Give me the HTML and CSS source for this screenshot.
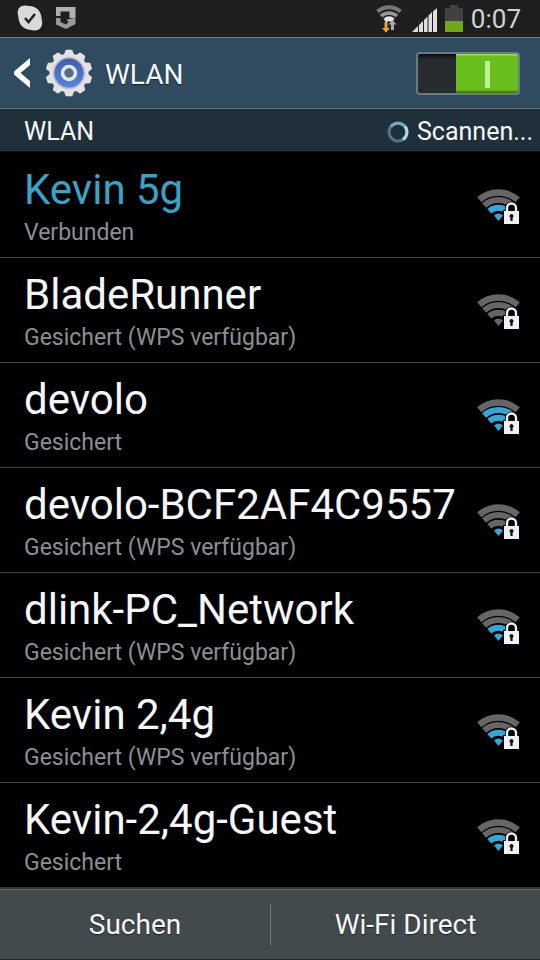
FILE: index.html
```
<!DOCTYPE html>
<html lang="de">
<head>
<meta charset="utf-8">
<meta name="viewport" content="width=device-width, initial-scale=1">
<title>WLAN</title>
<link rel="stylesheet" href="styles.css">
</head>
<body>
<svg class="sprite" aria-hidden="true">
  <symbol id="wifi" viewBox="0 0 44 36">
    <g fill="none">
      <path class="arc3" stroke-width="6.500" d="M2.300 10.800a29 29 0 0 1 38.400 0"/>
      <path class="arc2" stroke-width="6" d="M7.100 16.500a21.500 21.500 0 0 1 28.800 0"/>
      <path class="arc1" stroke-width="6" d="M12.300 22.300a14 14 0 0 1 18.400 0"/>
    </g>
    <path class="arc0" d="M17 26.500q4.500-4 9 0L21.500 32z"/>
    <path fill="#000" d="M26 36V21h2v-2a6.500 6.500 0 0 1 13 0v2h3v15z"/>
    <path fill="none" stroke="#eef0f6" stroke-width="2.400" d="M30 22.500v-3.500a4.500 4.500 0 0 1 9 0v3.500"/>
    <path fill="#eef0f6" d="M27 22h15v13H27z"/>
    <path fill="#111" d="M34.500 25a2.200 2.200 0 0 1 1.100 4v3h-2.200v-3a2.200 2.200 0 0 1 1.100-4z"/>
  </symbol>
</svg>
<div class="screen">
  <div class="status">
    <div class="status-group">
      <svg width="26" height="26" viewBox="0 0 26 26" aria-hidden="true">
        <path fill="#dadada" d="M7.500.5c2 0 3.500.5 5 .5C19 1 24 6 24.500 12.500c0 1.500.7 3 .7 5.500 0 4-3 7.500-7 7.500-2 0-3.500-.7-5.200-.8C7 24.500 2 20 1.500 13 1.300 11 .7 9.500.7 7.500.7 3.500 3.500.5 7.500.5z"/>
        <path fill="none" stroke="#222" stroke-width="2.500" d="M8 13l3.500 4L18 9"/>
      </svg>
      <svg width="20" height="24" viewBox="0 0 20 24" aria-hidden="true">
        <path fill="#b0b0b0" d="M0 2h19.500v11h-6V6.500H4.500V11H0z"/>
        <path fill="#999" d="M0 13h4.500v4l5.500 2.500 2.500-2.500-2-2.500 9-1.500v6L10 24 0 19.500z"/>
      </svg>
    </div>
    <div class="status-group status-right">
      <svg width="26" height="28" viewBox="0 0 26 28" aria-hidden="true">
        <g fill="none">
          <path stroke="#777" stroke-width="4" d="M1.500 6.500a17.500 17.500 0 0 1 23 0"/>
          <path stroke="#999" stroke-width="3.500" d="M5 11a12 12 0 0 1 16 0"/>
        </g>
        <path fill="#e4e4e4" d="M7.500 13.500q5.500-4.500 11 0L16 17.500q-3-2.500-6 0z"/>
        <path fill="#e9a33a" d="M8.500 17h3v6h2.500l-4 4.500L6 23h2.500z"/>
        <path fill="#a9a9b2" d="M15 25v-5.500h-2.500l4-4.500 4 4.500H18V25z"/>
      </svg>
      <svg class="signal" width="25" height="24" viewBox="0 0 25 24" aria-hidden="true">
        <path fill="#dedede" d="M0 24l6-6v6zM7 24v-7l4-4v11zM12 24V12l3.500-3.500V24zM16.500 24V7.500L20 4v20zM21 24V3.500L25 0v24z"/>
      </svg>
      <svg class="battery" width="18" height="27" viewBox="0 0 18 27" aria-hidden="true">
        <path fill="#414141" d="M5 0h8v3h5v13H0V3h5z"/>
        <path fill="#73a51a" d="M0 16h18v11H0z"/>
      </svg>
      <span class="clock">0:07</span>
    </div>
  </div>

  <header class="bar">
    <button class="back" type="button" aria-label="Zurück">
      <svg width="17" height="30" viewBox="0 0 17 30" aria-hidden="true"><path fill="#fff" d="M16 0v7L6.500 15l9.500 8v7L0 16.500v-3z"/></svg>
      <svg width="48" height="48" viewBox="-24 -24 48 48" aria-hidden="true">
        <defs>
          <linearGradient id="disc" x1="0" y1="0" x2="0" y2="1"><stop offset="0" stop-color="#3f5fae"/><stop offset="1" stop-color="#5583dc"/></linearGradient>
          <path id="tooth" stroke="#e3e1e3" stroke-width="2" stroke-linejoin="round" d="M-4.500-17l2-5.300h5L4.500-17z"/>
        </defs>
        <g fill="#e3e1e3">
          <circle r="19.500"/>
          <use href="#tooth"/><use href="#tooth" transform="rotate(36)"/><use href="#tooth" transform="rotate(72)"/><use href="#tooth" transform="rotate(108)"/><use href="#tooth" transform="rotate(144)"/><use href="#tooth" transform="rotate(180)"/><use href="#tooth" transform="rotate(216)"/><use href="#tooth" transform="rotate(252)"/><use href="#tooth" transform="rotate(288)"/><use href="#tooth" transform="rotate(324)"/>
        </g>
        <circle r="16" fill="#b9bac4"/>
        <circle r="14.500" fill="url(#disc)"/>
        <circle r="6.500" fill="#546b85" stroke="#e6e6e8" stroke-width="3.500"/>
      </svg>
    </button>
    <h1>WLAN</h1>
    <input class="toggle" type="checkbox" aria-label="WLAN" checked>
  </header>

  <div class="section">
    <h2>WLAN</h2>
    <div class="scan">
      <svg width="22" height="22" viewBox="0 0 22 22" aria-hidden="true" fill="none" stroke-width="3">
        <circle cx="11" cy="11" r="9" stroke="#547488"/>
        <path stroke="#79a7c0" d="M4 5.500a9 9 0 0 1 14 0"/>
        <path stroke="#a9daf0" d="M18 5.500a9 9 0 0 1-2 13"/>
      </svg>
      <span>Scannen...</span>
    </div>
  </div>

  <ul class="list">
    <li><button class="row connected" type="button"><span class="text"><span class="name">Kevin 5g</span><span class="info">Verbunden</span></span><svg class="wifi level-2" aria-hidden="true"><use href="#wifi"/></svg></button></li>
    <li><button class="row" type="button"><span class="text"><span class="name">BladeRunner</span><span class="info">Gesichert (WPS verfügbar)</span></span><svg class="wifi" aria-hidden="true"><use href="#wifi"/></svg></button></li>
    <li><button class="row" type="button"><span class="text"><span class="name">devolo</span><span class="info">Gesichert</span></span><svg class="wifi level-3" aria-hidden="true"><use href="#wifi"/></svg></button></li>
    <li><button class="row" type="button"><span class="text"><span class="name">devolo-BCF2AF4C9557</span><span class="info">Gesichert (WPS verfügbar)</span></span><svg class="wifi level-1" aria-hidden="true"><use href="#wifi"/></svg></button></li>
    <li><button class="row" type="button"><span class="text"><span class="name">dlink-PC_Network</span><span class="info">Gesichert (WPS verfügbar)</span></span><svg class="wifi level-2" aria-hidden="true"><use href="#wifi"/></svg></button></li>
    <li><button class="row" type="button"><span class="text"><span class="name">Kevin 2,4g</span><span class="info">Gesichert (WPS verfügbar)</span></span><svg class="wifi level-2" aria-hidden="true"><use href="#wifi"/></svg></button></li>
    <li><button class="row" type="button"><span class="text"><span class="name">Kevin-2,4g-Guest</span><span class="info">Gesichert</span></span><svg class="wifi level-2" aria-hidden="true"><use href="#wifi"/></svg></button></li>
  </ul>

  <footer class="actions">
    <button type="button">Suchen</button>
    <button type="button">Wi-Fi Direct</button>
  </footer>
</div>
</body>
</html>
```
FILE: styles.css
```
* {
  box-sizing: border-box;
}

body {
  margin: 0;
  background: #000;
  color: #f5f8fa;
  font-family: Roboto, "Liberation Sans", sans-serif;
}

button {
  border: 0;
  padding: 0;
  background: none;
  color: inherit;
  font: inherit;
}

svg {
  display: block;
  flex: none;
}

.sprite {
  position: absolute;
  width: 0;
  height: 0;
}

.screen {
  display: flex;
  flex-direction: column;
  min-height: 100vh;
}

.status {
  display: flex;
  justify-content: space-between;
  height: 37px;
  padding: 5px 19px 0 17px;
  background: #1e1e1e;
}

.status-group {
  display: flex;
  gap: 13px;
  align-items: flex-start;
}

.status-right {
  gap: 8px;
}

.signal {
  margin: 3px 0 0 2px;
}

.clock {
  color: #d2d2d2;
  font-size: 26px;
  line-height: 28px;
}

.bar {
  display: flex;
  align-items: center;
  height: 71px;
  padding: 0 20px 0 14px;
  border-top: 1px solid #6f8490;
  background: #304b60;
}

.back {
  display: flex;
  gap: 14px;
  align-items: center;
}

h1,
h2 {
  margin: 0;
  font-weight: 400;
}

h1 {
  flex: 1;
  padding: 4px 0 0 12px;
  font-size: 28px;
  line-height: 36px;
  text-shadow: 0 1px 1px #14202a;
}

.toggle {
  appearance: none;
  width: 104px;
  height: 43px;
  margin: 0;
  border: 2px solid #6b7c80;
  border-radius: 4px;
  background:
    linear-gradient(#bdf193, #bdf193) 67px 7px / 5px 27px no-repeat,
    linear-gradient(#a0de68 0 1px, #69bd1c 2px 36px, #3b7c0c 38px) right / 62px 100% no-repeat,
    linear-gradient(#080a0b, #272b2e 5px);
}

.section {
  display: flex;
  align-items: center;
  justify-content: space-between;
  height: 44px;
  padding: 2px 7px 0 24px;
  border-top: 1px solid #607782;
  background: #20303b;
  box-shadow: inset 0 -1px #0c1216;
}

h2,
.scan {
  font-size: 25px;
  line-height: 32px;
}

.scan {
  display: flex;
  gap: 8px;
  align-items: center;
}

.list {
  flex: 1;
  margin: 0;
  padding: 0;
  list-style: none;
}

.row {
  display: flex;
  align-items: center;
  justify-content: space-between;
  width: 100%;
  height: 105px;
  padding: 4px 19px 0 24px;
  text-align: left;
}

li + li {
  box-shadow: inset 0 1px #444;
}

.text {
  display: flex;
  flex-direction: column;
}

.name {
  font-size: 42px;
  line-height: 50px;
}

.info {
  padding-top: 2px;
  color: #8a9095;
  font-size: 23px;
  line-height: 32px;
}

.connected .name {
  color: #3ca2c5;
}

.wifi {
  --a0: #666;
  --a1: #666;
  --a2: #666;
  width: 44px;
  height: 36px;
}

.level-1,
.level-2,
.level-3 {
  --a0: #37a5d2;
}

.level-2,
.level-3 {
  --a1: #37a5d8;
}

.level-3 {
  --a2: #37a5d8;
}

.arc3 {
  stroke: #666;
}

.arc2 {
  stroke: var(--a2);
}

.arc1 {
  stroke: var(--a1);
}

.arc0 {
  fill: var(--a0);
}

.actions {
  display: grid;
  grid-template-columns: 1fr 1fr;
  align-items: center;
  height: 73px;
  border-top: 2px solid #343a3b;
  background: #434a4c;
  box-shadow: inset 0 1px #5e6666, inset 0 -1px #24282a;
}

.actions button {
  height: 41px;
  font-size: 28px;
  text-shadow: 0 1px 1px #1d2122;
}

.actions button + button {
  border-left: 1px solid #707879;
}
```
